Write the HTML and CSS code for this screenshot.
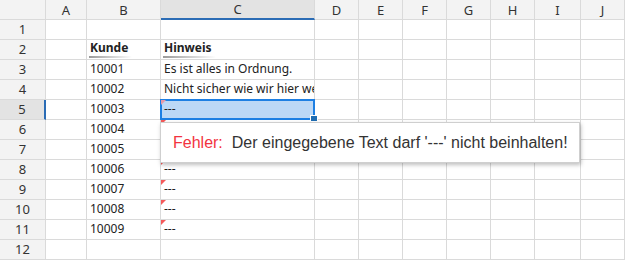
FILE: index.html
```html
<!DOCTYPE html>
<html>
<head>
<meta charset="utf-8">
<link rel="stylesheet" href="styles.css">
</head>
<body>
<div class="sheet">
  <div class="row hdr">
    <div class="c"></div><div class="c">A</div><div class="c">B</div><div class="c sel">C</div><div class="c">D</div><div class="c">E</div><div class="c">F</div><div class="c">G</div><div class="c">H</div><div class="c">I</div><div class="c">J</div>
  </div>
  <div class="row"><div class="c rh">1</div><div class="c"></div><div class="c"></div><div class="c"></div><div class="c"></div><div class="c"></div><div class="c"></div><div class="c"></div><div class="c"></div><div class="c"></div><div class="c"></div></div>
  <div class="row"><div class="c rh">2</div><div class="c"></div><div class="c"><span class="title">Kunde</span></div><div class="c"><span class="title">Hinweis</span></div><div class="c"></div><div class="c"></div><div class="c"></div><div class="c"></div><div class="c"></div><div class="c"></div><div class="c"></div></div>
  <div class="row"><div class="c rh">3</div><div class="c"></div><div class="c">10001</div><div class="c">Es ist alles in Ordnung.</div><div class="c"></div><div class="c"></div><div class="c"></div><div class="c"></div><div class="c"></div><div class="c"></div><div class="c"></div></div>
  <div class="row"><div class="c rh">4</div><div class="c"></div><div class="c">10002</div><div class="c">Nicht sicher wie wir hier weiter vorgehen sollen.</div><div class="c"></div><div class="c"></div><div class="c"></div><div class="c"></div><div class="c"></div><div class="c"></div><div class="c"></div></div>
  <div class="row"><div class="c rh rsel">5</div><div class="c"></div><div class="c">10003</div><div class="c active bad">---<span class="handle"></span></div><div class="c"></div><div class="c"></div><div class="c"></div><div class="c"></div><div class="c"></div><div class="c"></div><div class="c"></div></div>
  <div class="row"><div class="c rh">6</div><div class="c"></div><div class="c">10004</div><div class="c bad">---</div><div class="c"></div><div class="c"></div><div class="c"></div><div class="c"></div><div class="c"></div><div class="c"></div><div class="c"></div></div>
  <div class="row"><div class="c rh">7</div><div class="c"></div><div class="c">10005</div><div class="c bad">---</div><div class="c"></div><div class="c"></div><div class="c"></div><div class="c"></div><div class="c"></div><div class="c"></div><div class="c"></div></div>
  <div class="row"><div class="c rh">8</div><div class="c"></div><div class="c">10006</div><div class="c bad">---</div><div class="c"></div><div class="c"></div><div class="c"></div><div class="c"></div><div class="c"></div><div class="c"></div><div class="c"></div></div>
  <div class="row"><div class="c rh">9</div><div class="c"></div><div class="c">10007</div><div class="c bad">---</div><div class="c"></div><div class="c"></div><div class="c"></div><div class="c"></div><div class="c"></div><div class="c"></div><div class="c"></div></div>
  <div class="row"><div class="c rh">10</div><div class="c"></div><div class="c">10008</div><div class="c bad">---</div><div class="c"></div><div class="c"></div><div class="c"></div><div class="c"></div><div class="c"></div><div class="c"></div><div class="c"></div></div>
  <div class="row"><div class="c rh">11</div><div class="c"></div><div class="c">10009</div><div class="c bad">---</div><div class="c"></div><div class="c"></div><div class="c"></div><div class="c"></div><div class="c"></div><div class="c"></div><div class="c"></div></div>
  <div class="row"><div class="c rh">12</div><div class="c"></div><div class="c"></div><div class="c"></div><div class="c"></div><div class="c"></div><div class="c"></div><div class="c"></div><div class="c"></div><div class="c"></div><div class="c"></div></div>

  <div class="tip"><span class="err">Fehler:</span><span class="msg">Der eingegebene Text darf '---' nicht beinhalten!</span></div>
</div>
</body>
</html>
```

FILE: styles.css
```css
html, body { margin: 0; padding: 0; background: #fff; }
.sheet {
  position: relative;
  width: 625px;
  height: 260px;
  overflow: hidden;
  font-family: "Noto Sans", "Open Sans", sans-serif;
  font-size: 12px;
  color: #222;
}
.row {
  display: grid;
  grid-template-columns: 46px 41px 74px 154px 44px 44px 44px 44px 44px 46px 44px;
  height: 20px;
}
.c {
  box-sizing: border-box;
  border-right: 1px solid #dadada;
  border-bottom: 1px solid #dadada;
  display: flex;
  align-items: flex-end;
  padding: 0 3px 2px 3px;
  white-space: nowrap;
  overflow: hidden;
  position: relative;
  min-width: 0;
}
.hdr .c {
  background: #f3f3f3;
  align-items: center;
  justify-content: center;
  padding: 0;
  font-size: 13px;
  color: #333;
}
.hdr .c.sel {
  background: #e3e3e3;
  border-bottom: 2px solid #2b6cb5;
}
.c.rh {
  background: #f3f3f3;
  justify-content: center;
  padding: 0 0 1px 0;
  font-size: 13px;
  color: #333;
}
.c.rh.rsel {
  background: #e3e3e3;
  border-right: 2px solid #2b6cb5;
}
.title {
  font-weight: bold;
  position: relative;
  padding-bottom: 1px;
}
.title::after {
  content: "";
  position: absolute;
  left: -1px;
  right: -4px;
  bottom: -1px;
  height: 2px;
  background: linear-gradient(to right, #9a9a9a, rgba(255,255,255,0));
}
.c.bad::before {
  content: "";
  position: absolute;
  left: 0;
  top: 0;
  width: 5px;
  height: 5px;
  background: #f55a5a;
  clip-path: polygon(0 0, 100% 0, 0 100%);
}
.c.active {
  overflow: visible;
  background: #bcd8f6;
  z-index: 2;
}
.c.active::after {
  content: "";
  position: absolute;
  left: -1px;
  top: -1px;
  right: -1px;
  bottom: -1px;
  border: 2px solid #1d7fe3;
}
.c.active.bad::before {
  background: #e79aa8;
  z-index: 1;
}
.handle {
  position: absolute;
  right: -4px;
  bottom: -3px;
  width: 6px;
  height: 5px;
  background: #1f6db3;
  border: 1px solid #fff;
  z-index: 3;
}
.tip {
  position: absolute;
  left: 160px;
  top: 122px;
  width: 420px;
  height: 41px;
  box-sizing: border-box;
  background: #fff;
  border: 1px solid #cfcfcf;
  box-shadow: 1px 2px 4px rgba(0,0,0,0.25);
  display: flex;
  align-items: center;
  gap: 9px;
  padding: 0 0 0 12px;
  font-family: "Liberation Sans", Arial, sans-serif;
  font-size: 16px;
  z-index: 5;
}
.err { color: #f2343f; }
.msg { color: #333; }
```
